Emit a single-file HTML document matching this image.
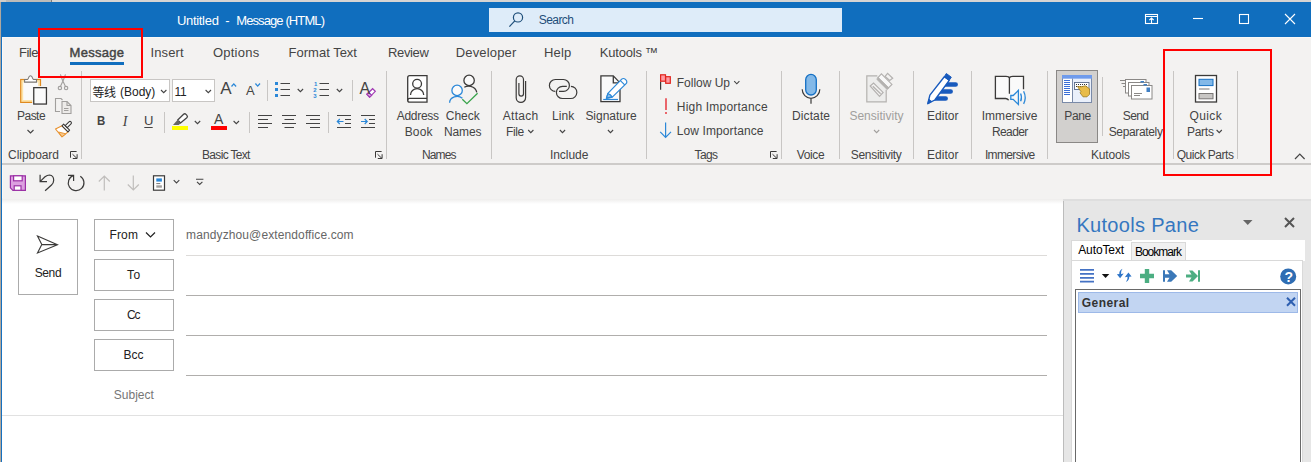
<!DOCTYPE html>
<html lang="en"><head><meta charset="utf-8"><title>Untitled - Message (HTML)</title>
<style>
html,body{margin:0;padding:0}
body{width:1311px;height:462px;position:relative;overflow:hidden;background:#f3f2f1;font-family:"Liberation Sans","Noto Sans CJK SC",sans-serif;font-size:12px;color:#444}
.a{position:absolute}
.t{position:absolute;white-space:nowrap;line-height:1;font-size:12px;color:#444}
.sep{position:absolute;width:1px;background:#c8c6c4;top:71px;height:88px}
svg{position:absolute;overflow:visible}
.box{position:absolute;box-sizing:border-box;border:1px solid #ababab;background:#fff}
.ln{position:absolute;height:1px;left:186px;width:861px;background:#b0aeac}
</style></head><body>
<!-- window chrome -->
<div class="a" style="left:0;top:0;width:1311px;height:2px;background:#d6d4d3"></div>
<div class="a" style="left:0;top:0;width:51px;height:2px;background:#bdbbb9"></div>
<div class="a" style="left:0;top:0;width:6px;height:2px;background:#d0cdc9"></div>
<div class="a" style="left:51px;top:0;width:1px;height:2px;background:#7d7b79"></div>
<div class="a" style="left:0;top:2px;width:1311px;height:35px;background:#106ebe"></div>
<div class="a" style="left:0;top:2px;width:1px;height:460px;background:#b0a89e"></div>
<div class="a" style="left:1px;top:2px;width:1px;height:460px;background:#1670bf"></div>
<div class="a" style="left:2px;top:37px;width:1px;height:161px;background:#faf8f6"></div>
<div class="a" style="left:2px;top:37px;width:1309px;height:1px;background:#f9f8f7"></div>
<div class="a" style="left:489px;top:8px;width:353px;height:24px;background:#deecf9"></div>
<!-- compose area -->
<div class="a" style="left:2px;top:199px;width:1061px;height:5px;background:linear-gradient(#eeedec,#fff)"></div>
<div class="a" style="left:2px;top:204px;width:1061px;height:258px;background:#fff"></div>
<div class="a" style="left:2px;top:163px;width:1309px;height:2px;background:#cdcbc9"></div>
<div class="box" style="left:18px;top:219px;width:60px;height:76px"></div>
<div class="box" style="left:94px;top:219px;width:80px;height:32px"></div>
<div class="box" style="left:94px;top:259px;width:80px;height:32px"></div>
<div class="box" style="left:94px;top:299px;width:80px;height:32px"></div>
<div class="box" style="left:94px;top:339px;width:80px;height:32px"></div>
<div class="ln" style="top:255px;background:#dddbd9"></div>
<div class="ln" style="top:295px"></div>
<div class="ln" style="top:335px"></div>
<div class="ln" style="top:375px"></div>
<div class="a" style="left:2px;top:415px;width:1061px;height:1px;background:#e1e1e1"></div>
<!-- kutools pane -->
<div class="a" style="left:1063px;top:199px;width:248px;height:263px;background:#e6e6e6"></div>
<div class="a" style="left:1063px;top:199px;width:248px;height:2px;background:#dedede"></div>
<div class="a" style="left:1063px;top:201px;width:1px;height:261px;background:#bcbcbc"></div>
<div class="a" style="left:1072px;top:240px;width:233px;height:21px;background:#fff"></div>
<div class="a" style="left:1071px;top:240px;width:61px;height:222px;box-sizing:border-box;border:1px solid #d9d9d9;border-right:0;border-bottom:0"></div>
<div class="a" style="left:1072px;top:260px;width:231px;height:202px;background:#fff;box-sizing:border-box;border:1px solid #d9d9d9;border-bottom:0;border-left:0"></div>
<div class="a" style="left:1131px;top:242px;width:55px;height:19px;background:#f0f0f0;box-sizing:border-box;border:1px solid #d9d9d9"></div>
<div class="a" style="left:1075px;top:289px;width:226px;height:180px;background:#fff;box-sizing:border-box;border:1px solid #696969"></div>
<div class="a" style="left:1078px;top:292px;width:220px;height:21px;background:#c2d5f2;box-sizing:border-box;border:1px solid #9db9e8"></div>
<!-- ribbon separators -->
<div class="sep" style="left:81px"></div>
<div class="sep" style="left:386px"></div>
<div class="sep" style="left:491px"></div>
<div class="sep" style="left:646px"></div>
<div class="sep" style="left:781px"></div>
<div class="sep" style="left:839px"></div>
<div class="sep" style="left:913px"></div>
<div class="sep" style="left:971px"></div>
<div class="sep" style="left:1047px"></div>
<div class="sep" style="left:1173px"></div>
<div class="sep" style="left:1237px"></div>
<div class="sep" style="left:1102px;top:77px;height:59px"></div>
<!-- pane button -->
<div class="a" style="left:1056px;top:70px;width:42px;height:73px;background:#d2d0ce;box-sizing:border-box;border:1px solid #8a8886"></div>
<!-- font boxes -->
<div class="a" style="left:90px;top:79px;width:80px;height:23px;background:#fff;box-sizing:border-box;border:1px solid #c8c6c4"></div>
<div class="a" style="left:172px;top:79px;width:43px;height:23px;background:#fff;box-sizing:border-box;border:1px solid #c8c6c4"></div>
<!-- tab underline -->
<div class="a" style="left:70px;top:62px;width:54px;height:3px;background:#106ebe"></div>
<svg style="left:0;top:0" width="1311" height="462" viewBox="0 0 1311 462" fill="none" stroke-linecap="butt" stroke-linejoin="miter">
<!-- title bar: search icon + window controls -->
<g stroke="#1e4e79" stroke-width="1.2"><circle cx="518" cy="17.4" r="4.6"/><path d="M514.8 20.9L509.4 26.7"/></g>
<g stroke="#fff" stroke-width="1.1">
<rect x="1145.5" y="14.5" width="12" height="9"/><path d="M1145.5 16.5h12M1151.5 23.5v-5M1149.3 20.2l2.2-2.2 2.2 2.2"/>
<path d="M1193 18.5h10"/>
<rect x="1239.5" y="14.5" width="9" height="9"/>
<path d="M1285 14l10 10M1295 14l-10 10"/>
</g>
<!-- chevrons -->
<g stroke="#444" stroke-width="1.1">
<path d="M27.5 130l3 3 3-3"/>
<path d="M161 90l2.7 2.7 2.7-2.7"/>
<path d="M205.6 90l2.7 2.7 2.7-2.7"/>
<path d="M194.8 121l2.7 2.7 2.7-2.7"/>
<path d="M233.6 121l2.7 2.7 2.7-2.7"/>
<path d="M297.7 89l2.7 2.7 2.7-2.7"/>
<path d="M336.8 89l2.7 2.7 2.7-2.7"/>
<path d="M528.2 130l2.6 2.6 2.6-2.6"/>
<path d="M559.9 130l2.6 2.6 2.6-2.6"/>
<path d="M607.9 130l2.6 2.6 2.6-2.6"/>
<path d="M734.2 81.2l2.6 2.6 2.6-2.6"/>
<path d="M1216.6 130l2.6 2.6 2.6-2.6"/>
<path d="M173.7 180.2l2.8 2.8 2.8-2.8"/>
<path d="M196 179.3h7.4M197 181.8l2.7 2.7 2.7-2.7"/>
<path d="M1295 159l4.8-4.8 4.8 4.8" stroke-width="1.2"/>
<path d="M146 232.5l4.5 4.5 4.5-4.5" stroke="#222" stroke-width="1.2"/>
</g>
<path d="M874 130l2.6 2.6 2.6-2.6" stroke="#a19f9d" stroke-width="1.1"/>
<!-- dialog launchers -->
<g stroke="#3b3a39" stroke-width="1">
<path d="M70.5 157.7V151.5H76.6M72.5 154.2L77.0 158.5M77.1 154.2V158.5H72.8"/>
<path d="M375.5 157.7V151.5H381.6M377.5 154.2L382.0 158.5M382.1 154.2V158.5H377.8"/>
<path d="M770.5 157.7V151.5H776.6M772.5 154.2L777.0 158.5M777.1 154.2V158.5H772.8"/>
</g>
<!-- paste -->
<g>
<rect x="20.700" y="79.500" width="19.800" height="22.900" fill="#fde3a8" stroke="#e08a1e" stroke-width="1.200"/>
<rect x="23.200" y="82.300" width="14.900" height="17.700" fill="#fafafa"/>
<path d="M24.600 82.100V79.500H27.400Q28.200 79.300 28.500 78Q29 75.800 30.500 75.800Q32 75.800 32.500 78Q32.800 79.300 33.600 79.500H36.500V82.100z" fill="#fff" stroke="#797775" stroke-width="1.100"/>
<rect x="32.200" y="86.100" width="15.800" height="19.500" fill="#f8f7f6"/>
<rect x="33.750" y="87.650" width="12.700" height="16.400" fill="#fbfbfb" stroke="#3b3a39" stroke-width="1.300"/>
</g>
<!-- cut / copy / painter -->
<g stroke="#a19f9d" stroke-width="1.1">
<path d="M60.400 74.400L62.400 80L65.500 86.500M65.500 74.400L63.400 80L60.400 86.500"/><circle cx="59.900" cy="88.100" r="1.700" fill="#f3f2f1"/><circle cx="66.100" cy="88.100" r="1.700" fill="#f3f2f1"/>
<path d="M60 111.500H55.500V98.500H61L62.500 100" fill="none"/><path d="M62 101.500H67L71 105.500V113.500H62z" fill="#edebe9"/><path d="M67 101.500V105.500H71M64 108.500H68.500M64 110.500H68.500"/>
</g>
<g stroke-width="1.1" stroke-linejoin="round">
<path d="M55.500 129L62 125.800L68 131.800L62 136.800z" fill="#fff" stroke="#e8912d"/><path d="M58.500 132L65.800 133.800L62 136.800z" fill="#f8c88a" stroke="#e8912d" stroke-width="0.9"/>
<path d="M62 125.800L63.600 124.200L69.600 130.200L68 131.800z" fill="#fff" stroke="#3b3a39"/>
<path d="M65.200 125.600L69 121.800a1.400 1.400 0 0 1 2 2L67.200 127.600z" fill="#fff" stroke="#3b3a39"/>
</g>
<!-- B I U (text below) ; highlighter; font color bars -->
<rect x="172" y="126" width="16" height="4" fill="#ffff00"/>
<rect x="211" y="126" width="16" height="4" fill="#ff0000"/>
<path d="M177.700 120L183.600 114.300a1.700 1.700 0 0 1 2.400 0.100l0.900 1a1.700 1.700 0 0 1-0.100 2.400L180.500 123z" fill="#fff" stroke="#444" stroke-width="1.300" stroke-linejoin="round"/><path d="M177.200 120.200L180.400 123.400L178.700 124.900H173z" fill="#666"/>
<path d="M144.300 127.500h8.400" stroke="#444" stroke-width="1"/>
<!-- grow/shrink carets -->
<g stroke="#2b88d8" stroke-width="1.300"><path d="M231.500 86.500l2.300-2.600 2.300 2.600"/><path d="M255.400 83.500l2.300 2.600 2.300-2.600"/></g>
<!-- small separators -->
<g stroke="#c8c6c4" stroke-width="1"><path d="M164.500 112v21M249.500 112v21M328.500 112v21M267.500 80v21M352.500 80v21"/></g>
<!-- bullets -->
<g fill="#2b88d8"><rect x="275" y="82" width="3" height="3"/><rect x="275" y="88" width="3" height="3"/><rect x="275" y="94" width="3" height="3"/></g>
<g stroke="#444" stroke-width="1"><path d="M280.500 83.500h9.500M280.500 89.500h9.500M280.500 95.500h9.500"/><path d="M319.500 83.500h9.500M319.500 89.500h9.500M319.500 95.500h9.500"/></g>
<!-- eraser -->
<path d="M366.9 94.3L372.6 88.7L375.3 91.3L369.6 97.1z" stroke="#a23cb4" stroke-width="1.2" fill="#fff"/><path d="M366.9 94.3L368.8 92.5L371.6 95.3L369.6 97.1z" fill="#d9a6e0" stroke="#a23cb4" stroke-width="1.2"/>
<!-- align icons -->
<g stroke="#444" stroke-width="1">
<path d="M258 115.500h14M258 119.500h10M258 123.500h14M258 127.500h10"/>
<path d="M282 115.500h14M284.500 119.500h9.500M282 123.500h14M284.500 127.500h9.500"/>
<path d="M306 115.500h14M310 119.500h10M306 123.500h14M310 127.500h10"/>
<path d="M337 115.500h14M345 119.500h6M345 123.500h6M337 127.500h14"/>
<path d="M361 115.500h14M369 119.500h6M369 123.500h6M361 127.500h14"/>
</g>
<g stroke="#2b88d8" stroke-width="1.200"><path d="M337.500 121.500h6M339.800 119l-2.500 2.500 2.500 2.500"/><path d="M361 121.500h6M364.700 119l2.500 2.500-2.500 2.500"/></g>
<!-- address book -->
<g stroke="#3b3a39" stroke-width="1.300">
<path d="M427 75.700h-17.300a2 2 0 0 0-2 2v22.500a2 2 0 0 0 2 2h17.300z" fill="#fff"/>
<path d="M427 98.400h-17.300a2 2 0 0 0-2 2" />
<circle cx="417.100" cy="83.700" r="4.400"/><path d="M410.500 95a6.600 6.300 0 0 1 13.200 0"/>
</g>
<!-- check names -->
<g stroke-width="1.300">
<circle cx="469.100" cy="80.400" r="5.200" stroke="#3b3a39" fill="#fafafa"/>
<path d="M464.300 87.200q3-1.600 6.500-0.800q5 1.200 6 6" stroke="#3b3a39"/>
<circle cx="457.100" cy="90.400" r="5.200" stroke="#2b88d8" fill="#fafafa"/>
<path d="M449.600 102.800a7.500 6.500 0 0 1 12.800-4.500" stroke="#2b88d8"/>
<path d="M462.300 99.300l4.600 4.300 10.700-10.300" stroke="#37a34a"/>
</g>
<!-- paperclip -->
<path d="M525.600 81v16.700a4.700 4.700 0 0 1-9.400 0v-18.200a3.650 3.650 0 0 1 7.300 0v14.300a2.300 2.300 0 0 1-4.600 0v-10.800" stroke="#3b3a39" stroke-width="1.200"/>
<!-- link -->
<g stroke="#3b3a39" stroke-width="1.200"><path d="M559 91.400H563.450A5.950 5.950 0 0 0 563.450 79.500H555.350A5.950 5.950 0 0 0 555.350 91.400"/><path d="M566.800 86.300H562.500A6.100 6.100 0 0 0 562.500 98.500H570.600A6.100 6.100 0 0 0 570.900 86.300"/></g>
<!-- signature -->
<path d="M600.900 75.900H613.300L620 82.900V101.700H600.900z" fill="#fafafa" stroke="#3b3a39" stroke-width="1.300"/><path d="M613.300 75.900V82.900H620" stroke="#3b3a39" stroke-width="1.300"/>
<g stroke="#2b88d8" stroke-width="1.200" stroke-linejoin="round"><path d="M603.200 99.500H618"/><path d="M607.900 93.400L621.700 79.200a2.400 2.400 0 0 1 3.400 0l1 1a2.400 2.400 0 0 1 0 3.400L612.300 97.100L606.300 98.400z" fill="#fff"/><path d="M606.500 98.200L607.900 93.600Q610.600 94.100 612.100 96.900z" fill="#8cc0ee"/><path d="M620.400 80.600L624.700 84.900"/></g>
<!-- tags -->
<path d="M660.600 81.500V89.800" stroke="#3b3a39" stroke-width="1.200"/>
<rect x="660.600" y="74.800" width="4.900" height="6.400" fill="#ff9aa2" stroke="#e0241c" stroke-width="1.200"/><rect x="665.700" y="76.700" width="4.600" height="6.600" fill="#ff9aa2" stroke="#e0241c" stroke-width="1.200"/>
<path d="M666 98.200v11.800M666 112v2" stroke="#e8434a" stroke-width="1.600"/>
<path d="M665.600 122.600v14.500M660.200 131.800l5.400 5.500 5.400-5.500" stroke="#2b88d8" stroke-width="1.200"/>
<!-- mic -->
<rect x="805.700" y="74.400" width="10.600" height="20.600" rx="5.300" fill="#83b9e8" stroke="#1570c4" stroke-width="1.300"/>
<path d="M802.200 89.300a8.800 9 0 0 0 17.600 0M811 98.500v5.300" stroke="#3b3a39" stroke-width="1.200"/>
<!-- sensitivity (disabled) -->
<g stroke="#b4b2b0" stroke-width="1.200">
<path d="M866.800 75.900H886.200V101.900H866.800z" fill="#ededec" stroke="none"/>
<path d="M877.300 75.900H866.800V101.900H886.200V89.700"/>
<path d="M870.200 86L873.600 83L883.100 92.400L879.500 96.300z" fill="#f3f2f1"/><path d="M872.800 86.200L880.600 93.800" stroke-width="1.300"/>
<path d="M885.100 76.400L887.600 73.300L892.700 78.200L889.700 80.500z" fill="#f3f2f1"/>
<path d="M877.700 77.800L881.400 73.900L891.900 84.400L888.400 87.900z" fill="#f8f8f8"/>
<path d="M876.600 79.200L878.300 77.400L888.900 88L887.200 89.700z" fill="#b4b2b0" stroke-width="0.600"/>
</g>
<!-- editor -->
<g stroke="#185abd" stroke-width="4.7" stroke-linecap="round"><path d="M942 84.5H955.6M938 91.5H950.6M934 98.5H945.6"/></g>
<path d="M944.3 76.800L949.2 80.300L934.8 100L927.800 103.700L929.900 95.100z" fill="#fff" stroke="#185abd" stroke-width="1.400" stroke-linejoin="round"/>
<path d="M946.3 73.500L951.3 77.200L949.2 80.300L944.3 76.800z" fill="#185abd" stroke="#185abd" stroke-width="1" stroke-linejoin="round"/><path d="M927.800 103.700L928.900 99.200L931.800 101.500z" fill="#185abd" stroke="#185abd" stroke-width="0.8"/>
<!-- immersive reader -->
<path d="M995.400 76.300H1006q3 0 3.400 1.900q0.400-1.900 3.400-1.900H1023.500V98.500H995.400z" fill="#fafafa" stroke="none"/>
<path d="M1023.500 89.300V76.300H1012.800q-3 0-3.400 1.900q-0.400-1.900-3.400-1.900H995.400V98.500H1005.700q2.300 0.200 2.900 1.800M1009.400 78.200V93.800" stroke="#3b3a39" stroke-width="1.300"/>
<path d="M1010.800 95.500h2.400l5.200-5.100v14.100l-5.200-5.200h-2.400z" fill="#f8f8f8" stroke="#2b88d8" stroke-width="1.300" stroke-linejoin="miter"/>
<path d="M1020.600 93.400q1.800 3.900 0 7.800M1023.600 91.200q3.200 6.300 0 12.700" stroke="#2b88d8" stroke-width="1.300"/>
<!-- pane icon -->
<g>
<rect x="1062.500" y="75.500" width="29" height="27" fill="#fff" stroke="#7a8aa8" stroke-width="1"/>
<rect x="1073" y="79" width="18" height="23" fill="#eaf0fb"/>
<rect x="1062" y="75" width="30" height="3.700" fill="#6f9bec"/>
<path d="M1072.500 78.500v24" stroke="#7a8aa8" stroke-width="1"/>
<path d="M1064 80.500h6M1064 82.500h6M1064 84.500h6M1064 86.500h6M1064 88.500h6M1064 90.500h6M1064 92.500h6M1064 94.500h6" stroke="#3a6fd8" stroke-width="1"/>
<rect x="1074.500" y="82.500" width="14.500" height="7" fill="#fff" stroke="#5a6a8a" stroke-width="0.900"/><path d="M1076 84.500h12M1076 86.500h12" stroke="#333" stroke-width="1" stroke-dasharray="1 1"/>
<path d="M1077.500 86.500l3.500 0.300 4.500-1 4 3v5.500l-2.500 2.500h-4l-3-4 1-1z" fill="#e8bc4a" stroke="#9a7a20" stroke-width="0.800"/>
</g>
<!-- send separately -->
<g stroke="#8a8886" stroke-width="1" fill="#fff">
<path d="M1120 80.500h5M1121.500 83.500h3.500M1123 86.500h2" />
<rect x="1125.500" y="79.500" width="20.500" height="13.500"/><rect x="1128.500" y="82.500" width="20.500" height="13.500"/><rect x="1131.500" y="85.500" width="20.500" height="13.500"/>
<path d="M1134 93.500h8M1134 95.500h6" />
</g>
<rect x="1140.500" y="81" width="3.500" height="1.500" fill="#3f7fc4"/><rect x="1143.500" y="84" width="3.500" height="1.500" fill="#3f7fc4"/><rect x="1146.500" y="87.500" width="3.500" height="4.500" fill="#3f7fc4"/>
<!-- quick parts icon -->
<rect x="1195.500" y="75.500" width="21" height="26.500" fill="#fff" stroke="#3b3a39" stroke-width="1.300"/>
<rect x="1199" y="79.300" width="14" height="6.300" fill="#83b9e8" stroke="#1570c4" stroke-width="1"/>
<path d="M1199 89h10.500" stroke="#797775" stroke-width="1"/>
<rect x="1199" y="93.500" width="14" height="5.300" fill="#c8c6c4" stroke="#797775" stroke-width="1"/>
<!-- QAT -->
<path d="M10.400 175.800h15v14.500h-12.500l-2.500-2.500z" fill="#dca0e0" stroke="#9b2fa5" stroke-width="1.200"/>
<rect x="13.600" y="175.800" width="8.600" height="5" fill="#fff" stroke="#9b2fa5" stroke-width="1.200"/>
<rect x="14.200" y="185.800" width="6.800" height="4.500" fill="#fff" stroke="#9b2fa5" stroke-width="1.200"/>
<g stroke="#3b3a39" stroke-width="1.2">
<path d="M40.1 174.8V181.6H47M40.3 181.4L45 176.8Q47.2 175 49.5 175Q53.7 175.3 53.7 180.3Q53.7 183 51.5 185L45.1 190.7"/>
<path d="M68 175.3H73.6V180.9M73.6 175.4A7.85 7.85 0 1 0 80.3 176.2"/>
</g>
<g stroke="#c0bebc" stroke-width="1.200"><path d="M104.300 176v14.500M98.800 181.500l5.500-5.500 5.500 5.500"/><path d="M133.300 175.500v14.500M127.800 184.500l5.500 5.500 5.500-5.500"/></g>
<rect x="153.500" y="175.800" width="11" height="14.400" fill="#fff" stroke="#3b3a39" stroke-width="1.200"/>
<rect x="156.300" y="178.400" width="5.600" height="3.200" fill="#2b88d8"/><path d="M156.300 183.600h4" stroke="#797775"/><rect x="156.300" y="185.300" width="5.600" height="2.400" fill="#a19f9d"/>
<!-- send icon -->
<path d="M37.500 236l20 8.700-20 8.300 4.300-8.500z M41.800 244.600h15" stroke="#3b3a39" stroke-width="1.100" stroke-linejoin="miter"/>
<!-- pane header icons -->
<path d="M1243 220h9.500l-4.750 5z" fill="#666"/>
<path d="M1285 218l9 9M1294 218l-9 9" stroke="#555" stroke-width="2"/>
<g stroke="#4472c4" stroke-width="1.700"><path d="M1080 269.800h14M1080 273.800h14M1080 277.800h14M1080 281.700h14"/></g>
<path d="M1101.800 274h7.500l-3.750 4z" fill="#111"/>
<g fill="#2e75c8"><path d="M1122.500 268.700q-2 2.500-1.500 5.300l2.700-0.500-3.600 4.700-3.200-4 2.400-0.300q-0.300-3.500 3.200-5.200z"/><path d="M1126 282q2-2.500 1.500-5.300l-2.700 0.500 3.600-4.700 3.200 4-2.400 0.300q0.300 3.500-3.200 5.200z"/></g>
<path d="M1144.800 269h4.400v4.800h4.800v4.400h-4.800v4.800h-4.400v-4.800h-4.800v-4.400h4.800z" fill="#4cae82"/>
<path d="M1163 270.300h2v11.400h-2zM1165 274.300h4.500l-2.500-4h4.200l6 5.700-6 5.700h-4.200l2.500-4h-4.500z" fill="#3b78b8"/>
<path d="M1198 270.300h2v11.400h-2zM1186 274.500h5.500l-2.500-4h3.500l5.500 5.500-5.500 5.500h-3.500l2.500-4h-5.500z" fill="#4cae82"/>
<circle cx="1288.200" cy="276.400" r="8" fill="#2e6db3"/>
<path d="M1287 297.800l8 8M1295 297.800l-8 8" stroke="#2e5fb0" stroke-width="2"/>
</svg>

<div class="t" style="left:176.9px;top:14.0px;font-size:13px;letter-spacing:-0.30px;color:#fff;">Untitled</div>
<div class="t" style="left:225.2px;top:14.0px;font-size:13px;color:#fff;">-</div>
<div class="t" style="left:236.2px;top:14.0px;font-size:13px;letter-spacing:-0.89px;color:#fff;">Message (HTML)</div>
<div class="t" style="left:538.7px;top:13.8px;letter-spacing:-0.55px;color:#1e4e79;">Search</div>
<div class="t" style="left:19.0px;top:46.0px;font-size:13px;letter-spacing:-0.48px;">File</div>
<div class="t" style="left:69.6px;top:46.0px;font-size:13px;letter-spacing:0.29px;-webkit-text-stroke:0.45px #444;">Message</div>
<div class="t" style="left:150.4px;top:46.0px;font-size:13px;letter-spacing:0.16px;">Insert</div>
<div class="t" style="left:212.9px;top:46.0px;font-size:13px;letter-spacing:0.26px;">Options</div>
<div class="t" style="left:288.6px;top:46.0px;font-size:13px;">Format Text</div>
<div class="t" style="left:388.0px;top:46.0px;font-size:13px;letter-spacing:-0.35px;">Review</div>
<div class="t" style="left:455.8px;top:46.0px;font-size:13px;letter-spacing:0.15px;">Developer</div>
<div class="t" style="left:544.0px;top:46.0px;font-size:13px;letter-spacing:0.15px;">Help</div>
<div class="t" style="left:599.8px;top:46.0px;font-size:13px;letter-spacing:-0.21px;">Kutools ™</div>
<div class="t" style="left:17.1px;top:109.8px;letter-spacing:-0.55px;">Paste</div>
<div class="t" style="left:8.1px;top:148.8px;letter-spacing:-0.06px;">Clipboard</div>
<div class="t" style="left:202.0px;top:148.8px;letter-spacing:-0.67px;">Basic Text</div>
<div class="t" style="left:92.4px;top:86.6px;letter-spacing:-0.30px;color:#222;">等线</div>
<div class="t" style="left:120.1px;top:85.8px;letter-spacing:-0.03px;color:#222;">(Body)</div>
<div class="t" style="left:174.6px;top:85.8px;letter-spacing:-0.30px;color:#222;">11</div>
<div class="t" style="left:97.0px;top:114.3px;font-size:13px;font-weight:bold;transform:scaleX(.88);transform-origin:0 0;">B</div>
<div class="t" style="left:122.7px;top:114.7px;font-size:14px;font-family:'Liberation Serif',serif;font-style:italic;">I</div>
<div class="t" style="left:143.9px;top:114.3px;font-size:13px;">U</div>
<div class="t" style="left:213.9px;top:112.4px;font-size:14px;">A</div>
<div class="t" style="left:220.2px;top:80.3px;font-size:17px;">A</div>
<div class="t" style="left:245.9px;top:83.7px;font-size:13px;">A</div>
<div class="t" style="left:359.6px;top:81.2px;font-size:16px;">A</div>
<div class="t" style="left:313.9px;top:80.7px;font-size:6px;color:#2b88d8;font-weight:bold;">1</div>
<div class="t" style="left:313.2px;top:86.7px;font-size:6px;color:#2b88d8;font-weight:bold;">2</div>
<div class="t" style="left:313.2px;top:92.7px;font-size:6px;color:#2b88d8;font-weight:bold;">3</div>
<div class="t" style="left:1284.4px;top:270.1px;font-size:14px;color:#fff;font-weight:bold;">?</div>
<div class="t" style="left:396.7px;top:109.8px;letter-spacing:-0.29px;">Address</div>
<div class="t" style="left:404.7px;top:125.8px;letter-spacing:0.18px;">Book</div>
<div class="t" style="left:445.8px;top:109.8px;letter-spacing:-0.03px;">Check</div>
<div class="t" style="left:443.9px;top:125.8px;letter-spacing:-0.10px;">Names</div>
<div class="t" style="left:422.0px;top:148.8px;letter-spacing:-0.90px;">Names</div>
<div class="t" style="left:502.8px;top:109.8px;letter-spacing:0.27px;">Attach</div>
<div class="t" style="left:506.0px;top:125.8px;letter-spacing:-0.41px;">File</div>
<div class="t" style="left:551.9px;top:109.8px;letter-spacing:0.13px;">Link</div>
<div class="t" style="left:585.4px;top:109.8px;letter-spacing:-0.02px;">Signature</div>
<div class="t" style="left:549.9px;top:148.8px;letter-spacing:-0.03px;">Include</div>
<div class="t" style="left:676.8px;top:76.8px;letter-spacing:-0.02px;">Follow Up</div>
<div class="t" style="left:676.8px;top:100.8px;letter-spacing:0.20px;">High Importance</div>
<div class="t" style="left:676.8px;top:124.8px;letter-spacing:0.10px;">Low Importance</div>
<div class="t" style="left:694.6px;top:148.8px;letter-spacing:-0.62px;">Tags</div>
<div class="t" style="left:792.0px;top:109.8px;letter-spacing:0.11px;">Dictate</div>
<div class="t" style="left:796.8px;top:148.8px;letter-spacing:-0.39px;">Voice</div>
<div class="t" style="left:849.4px;top:109.8px;letter-spacing:0.02px;color:#a19f9d;">Sensitivity</div>
<div class="t" style="left:850.7px;top:148.8px;letter-spacing:-0.29px;">Sensitivity</div>
<div class="t" style="left:926.9px;top:109.8px;letter-spacing:0.07px;">Editor</div>
<div class="t" style="left:926.9px;top:148.8px;letter-spacing:0.07px;">Editor</div>
<div class="t" style="left:981.7px;top:109.8px;letter-spacing:0.04px;">Immersive</div>
<div class="t" style="left:992.0px;top:125.8px;letter-spacing:-0.61px;">Reader</div>
<div class="t" style="left:984.9px;top:148.8px;letter-spacing:-0.63px;">Immersive</div>
<div class="t" style="left:1064.3px;top:109.8px;letter-spacing:-0.41px;">Pane</div>
<div class="t" style="left:1122.8px;top:109.8px;letter-spacing:-0.64px;">Send</div>
<div class="t" style="left:1108.7px;top:125.8px;letter-spacing:-0.35px;">Separately</div>
<div class="t" style="left:1091.0px;top:148.8px;letter-spacing:-0.17px;">Kutools</div>
<div class="t" style="left:1189.4px;top:109.8px;letter-spacing:0.43px;">Quick</div>
<div class="t" style="left:1187.0px;top:125.8px;letter-spacing:-0.28px;">Parts</div>
<div class="t" style="left:1176.7px;top:148.8px;letter-spacing:-0.48px;">Quick Parts</div>
<div class="t" style="left:34.7px;top:266.8px;letter-spacing:-0.38px;color:#222;">Send</div>
<div class="t" style="left:109.4px;top:228.8px;letter-spacing:0.20px;color:#222;">From</div>
<div class="t" style="left:127.1px;top:268.8px;letter-spacing:0.41px;color:#222;">To</div>
<div class="t" style="left:126.9px;top:308.8px;letter-spacing:-0.97px;color:#222;">Cc</div>
<div class="t" style="left:123.4px;top:348.8px;letter-spacing:0.09px;color:#222;">Bcc</div>
<div class="t" style="left:113.7px;top:388.8px;letter-spacing:0.03px;color:#767676;">Subject</div>
<div class="t" style="left:186.1px;top:228.8px;letter-spacing:0.11px;color:#666;">mandyzhou@extendoffice.com</div>
<div class="t" style="left:1076.4px;top:215.1px;font-size:20px;letter-spacing:0.31px;color:#3577c0;">Kutools Pane</div>
<div class="t" style="left:1078.2px;top:243.8px;letter-spacing:-0.10px;color:#000;">AutoText</div>
<div class="t" style="left:1134.9px;top:245.8px;letter-spacing:-0.98px;color:#000;">Bookmark</div>
<div class="t" style="left:1081.8px;top:296.8px;letter-spacing:0.43px;color:#333;font-weight:bold;">General</div>
<!-- red annotation boxes -->
<div class="a" style="left:38px;top:28px;width:105px;height:50px;box-sizing:border-box;border:2px solid #f00"></div>
<div class="a" style="left:1163px;top:49px;width:109px;height:127px;box-sizing:border-box;border:2px solid #f00"></div>
</body></html>
